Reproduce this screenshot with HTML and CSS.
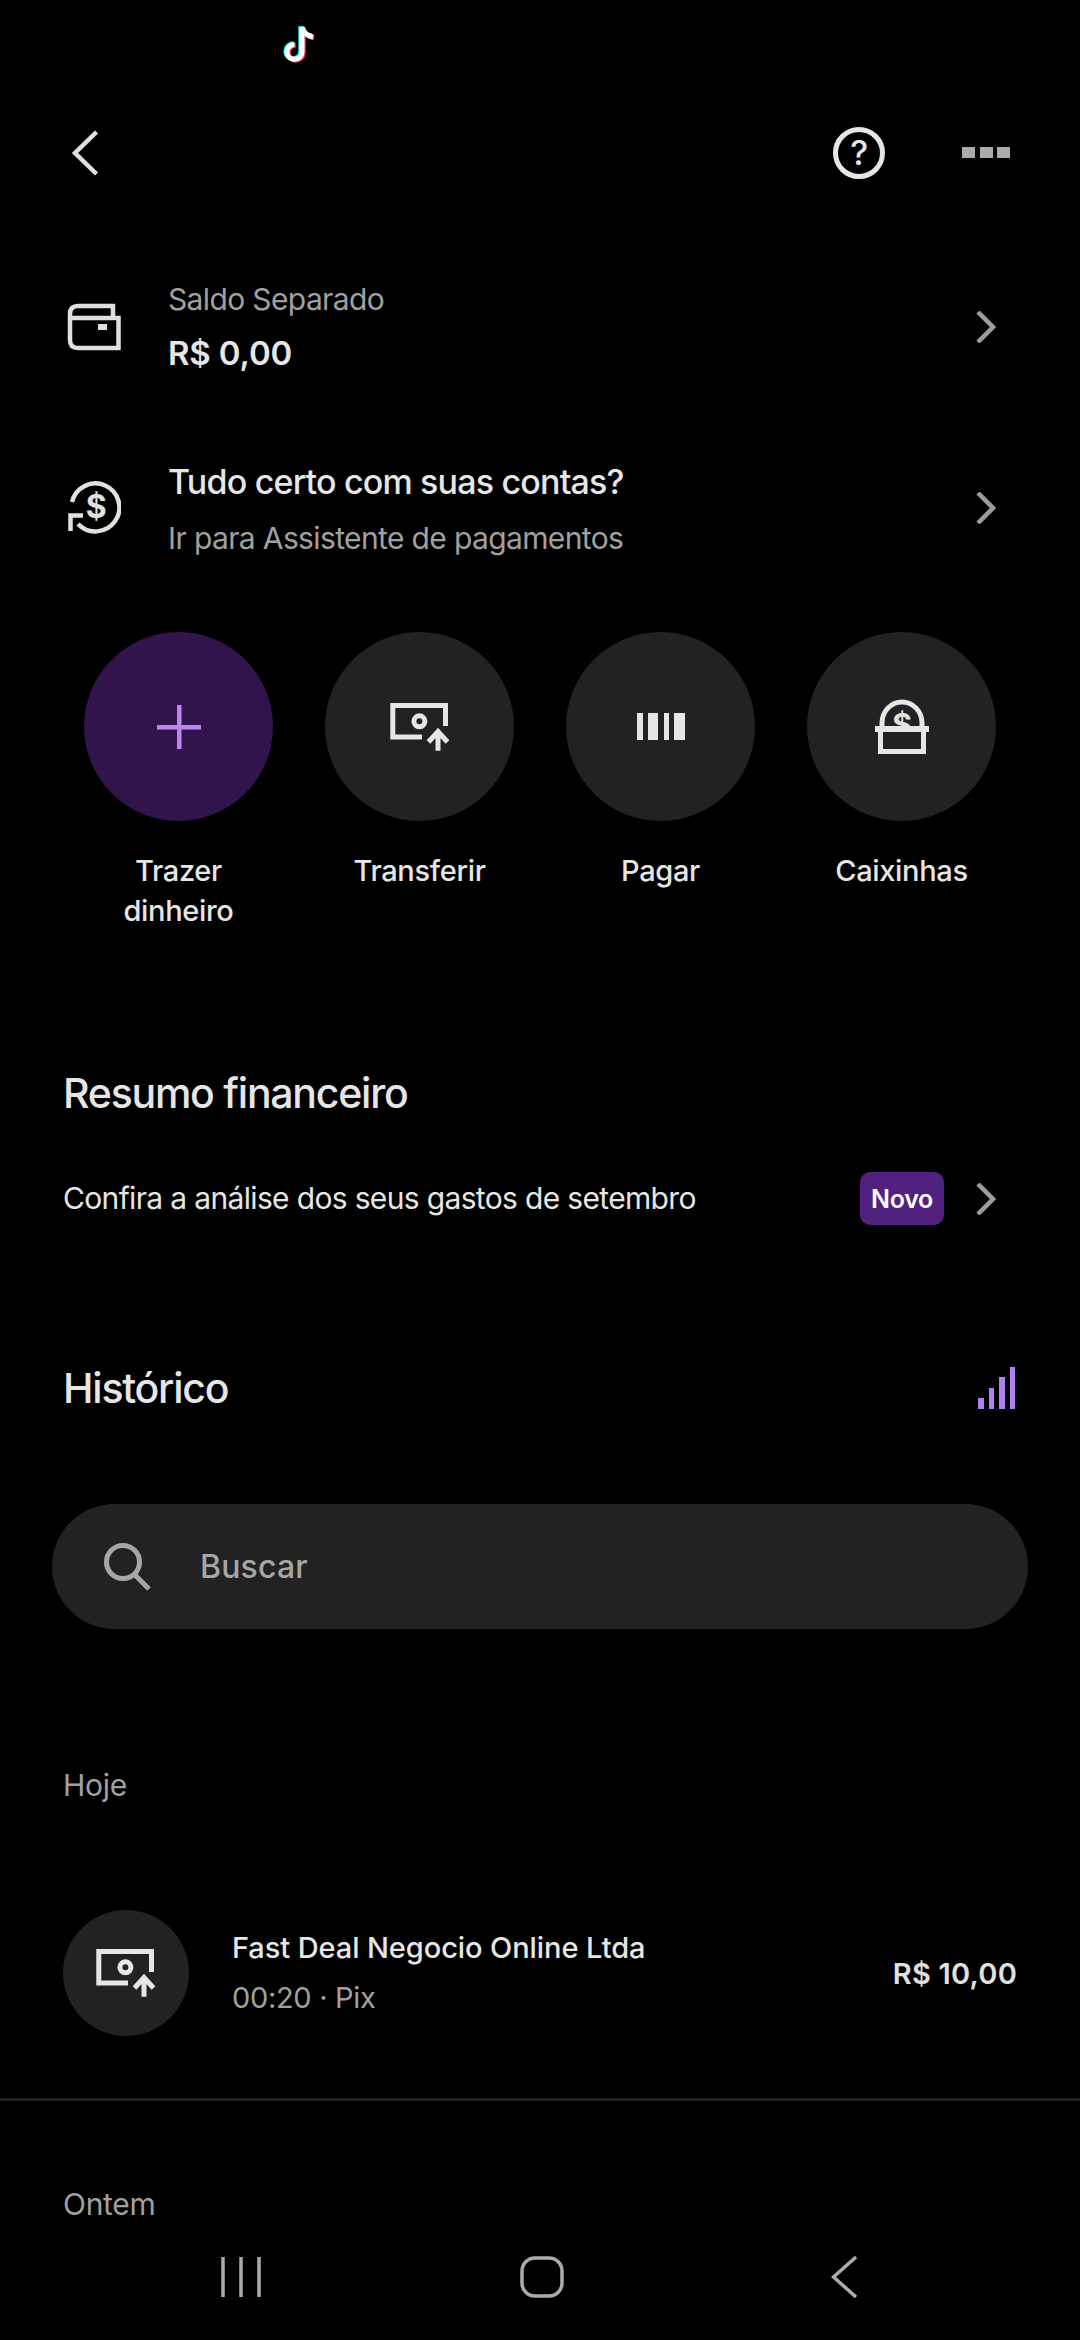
FILE: index.html
```html
<!DOCTYPE html>
<html lang="pt-BR">
<head>
  <meta charset="UTF-8" />
  <meta name="viewport" content="width=device-width, initial-scale=1.0"/>
  <title>Conta</title>
  <link rel="stylesheet" href="styles.css">
</head>
<body>
  <div class="screen">
    <div class="status">
      <svg class="tiktok" viewBox="0 0 36 40" fill="none" stroke-width="5">
        <path stroke="#25f4ee" transform="translate(-1.2 -.8)" d="M21 3V28A7.5 7.5 0 1 1 13.5 20.5M21 3C22 9 27 12 32 13"/>
        <path stroke="#fe2c55" transform="translate(1.2 .8)" d="M21 3V28A7.5 7.5 0 1 1 13.5 20.5M21 3C22 9 27 12 32 13"/>
        <path stroke="#fff" d="M21 3V28A7.5 7.5 0 1 1 13.5 20.5M21 3C22 9 27 12 32 13"/>
      </svg>
    </div>

    <div class="topbar">
      <svg class="back" viewBox="0 0 28 46" fill="none" stroke="#e0e0e0" stroke-width="4.5">
        <path d="M25.5 2L4 23L25.5 44"/>
      </svg>
      <svg class="help" viewBox="0 0 54 54" fill="none">
        <circle cx="27" cy="27" r="23.5" stroke="#e6e6e6" stroke-width="5"/>
        <text x="27" y="39" text-anchor="middle" class="help-mark">?</text>
      </svg>
      <div class="dots"><span></span><span></span><span></span></div>
    </div>

    <div class="info-row first">
      <svg class="row-icon" viewBox="0 0 54 48" fill="none" stroke="#e0e0e0" stroke-width="4.5">
        <path d="M46 15V3H11Q3 3 3 11V37Q3 45 11 45H51.5V15H3"/>
        <rect x="31" y="21" width="9" height="6" fill="#e0e0e0" stroke="none"/>
      </svg>
      <div class="info-text">
        <div class="muted">Saldo Separado</div>
        <div class="value">R$ 0,00</div>
      </div>
      <svg class="chevron" viewBox="0 0 20 32" fill="none" stroke="#9c9c9c" stroke-width="4.5">
        <path d="M2 1L17 16L2 31"/>
      </svg>
    </div>

    <div class="info-row second">
      <svg class="row-icon" viewBox="0 0 54 56" fill="none" stroke="#e0e0e0" stroke-width="4.5">
        <path d="M5 22A24 24 0 1 1 11 44"/>
        <path d="M3.5 51V35.5H16"/>
        <text x="29" y="38" text-anchor="middle" class="icon-dollar">$</text>
      </svg>
      <div class="info-text">
        <div class="value title">Tudo certo com suas contas?</div>
        <div class="muted">Ir para Assistente de pagamentos</div>
      </div>
      <svg class="chevron" viewBox="0 0 20 32" fill="none" stroke="#9c9c9c" stroke-width="4.5">
        <path d="M2 1L17 16L2 31"/>
      </svg>
    </div>

    <div class="actions">
      <div class="action">
        <div class="circle purple">
          <svg class="plus" viewBox="0 0 44 44" fill="#bb86f0">
            <rect x="0" y="20" width="44" height="4.5"/>
            <rect x="20" y="0" width="4.5" height="44"/>
          </svg>
        </div>
        <div class="action-label">Trazer dinheiro</div>
      </div>
      <div class="action">
        <div class="circle">
          <svg class="transfer" viewBox="0 0 60 50" fill="none" stroke="#e6e6e6" stroke-width="5">
            <path d="M55.5 24V3.5H2.8V35H32"/>
            <circle cx="29.4" cy="19.3" r="5.5"/>
            <path d="M48 48.7V29M38.5 40L48 29.5L57.5 40"/>
          </svg>
        </div>
        <div class="action-label">Transferir</div>
      </div>
      <div class="action">
        <div class="circle">
          <svg class="barcode" viewBox="0 0 48 27" fill="#e6e6e6">
            <rect x="0" width="6" height="27"/>
            <rect x="11" width="10" height="27"/>
            <rect x="27" width="5" height="27"/>
            <rect x="37" width="11" height="27"/>
          </svg>
        </div>
        <div class="action-label">Pagar</div>
      </div>
      <div class="action">
        <div class="circle">
          <svg class="piggy" viewBox="0 0 54 55" fill="none" stroke="#e6e6e6" stroke-width="5">
            <path d="M7 29V24A20 21 0 0 1 47 24V29"/>
            <text x="27" y="36" text-anchor="middle" class="icon-dollar small">$</text>
            <rect x="0" y="27" width="54" height="6" fill="#e6e6e6" stroke="none"/>
            <path fill="#222" d="M5.5 33V52.5H48.5V33"/>
          </svg>
        </div>
        <div class="action-label">Caixinhas</div>
      </div>
    </div>

    <h2 class="section-title resumo">Resumo financeiro</h2>
    <div class="summary">
      <span class="summary-text">Confira a análise dos seus gastos de setembro</span>
      <span class="badge">Novo</span>
      <svg class="chevron" viewBox="0 0 20 32" fill="none" stroke="#9c9c9c" stroke-width="4.5">
        <path d="M2 1L17 16L2 31"/>
      </svg>
    </div>

    <div class="history-head">
      <h2 class="section-title">Histórico</h2>
      <div class="bars"><span></span><span></span><span></span><span></span></div>
    </div>

    <div class="search">
      <svg class="search-icon" viewBox="0 0 48 48" fill="none" stroke="#a6a6a6" stroke-width="5">
        <circle cx="19" cy="19" r="16.5"/>
        <path d="M30 31L45 46"/>
      </svg>
      <span>Buscar</span>
    </div>

    <div class="day first">Hoje</div>
    <div class="tx">
      <div class="tx-circle">
        <svg class="transfer" viewBox="0 0 60 50" fill="none" stroke="#e6e6e6" stroke-width="5">
          <path d="M55.5 24V3.5H2.8V35H32"/>
          <circle cx="29.4" cy="19.3" r="5.5"/>
          <path d="M48 48.7V29M38.5 40L48 29.5L57.5 40"/>
        </svg>
      </div>
      <div class="tx-text">
        <div class="tx-name">Fast Deal Negocio Online Ltda</div>
        <div class="tx-sub">00:20 · Pix</div>
      </div>
      <div class="tx-amount">R$ 10,00</div>
    </div>
    <div class="divider"></div>
    <div class="day">Ontem</div>

    <div class="navbar">
      <svg class="nav-lines" viewBox="0 0 40 42" fill="none" stroke="#ababab" stroke-width="3.5">
        <path d="M2 1V41M20 1V41M38 1V41"/>
      </svg>
      <svg class="nav-home" viewBox="0 0 44 42" fill="none" stroke="#ababab" stroke-width="3.5">
        <rect x="2" y="2" width="40" height="38" rx="13"/>
      </svg>
      <svg class="nav-back" viewBox="0 0 27 42" fill="none" stroke="#ababab" stroke-width="3.5">
        <path d="M25 1L2.5 21L25 41"/>
      </svg>
    </div>
  </div>
</body>
</html>
```

FILE: styles.css
```css
* {
  box-sizing: border-box;
}

body {
  margin: 0;
  padding: 0;
  background: #000;
  font-family: Inter, Roboto, sans-serif;
  letter-spacing: -0.02em;
  color: #e6e6e6;
}

.screen {
  position: relative;
  width: 1080px;
  height: 2340px;
  overflow: hidden;
  background: #000;
}

.status {
  height: 100px;
  padding: 24px 0 0 281px;
}

.tiktok {
  display: block;
  width: 36px;
  height: 40px;
}

.topbar {
  display: flex;
  align-items: center;
  height: 105px;
  padding: 0 70px 0 71px;
}

.back {
  width: 28px;
  height: 46px;
  margin-right: auto;
}

.help {
  width: 54px;
  height: 54px;
}

.help-mark {
  font-family: Inter, sans-serif;
  font-size: 34px;
  font-weight: 500;
  fill: #e6e6e6;
  stroke: none;
}

.dots {
  display: flex;
  gap: 4.5px;
  margin-left: 76px;
}

.dots span {
  width: 13px;
  height: 11px;
  background: #ababab;
}

.info-row {
  display: flex;
  align-items: center;
  height: 100px;
  margin-top: 72px;
  padding: 0 84px 0 67px;
}

.info-row.second {
  margin-top: 81px;
}

.row-icon {
  flex: none;
  width: 54px;
  height: 50px;
}

.second .row-icon {
  height: 56px;
}

.info-text {
  flex: 1;
  margin-left: 47px;
}

.first .info-text {
  padding-bottom: 3px;
}

.second .info-text {
  padding-top: 3px;
}

.muted {
  font-size: 30px;
  line-height: 40px;
  letter-spacing: -0.021em;
  color: #a0a0a0;
}

.value {
  margin-top: 14px;
  font-size: 33px;
  line-height: 40px;
  font-weight: 600;
  letter-spacing: -0.005em;
}

.value.title {
  margin: 0 0 16px;
  font-size: 34px;
  font-weight: 500;
  letter-spacing: -0.024em;
}

.icon-dollar {
  font-family: Inter, sans-serif;
  font-size: 32px;
  font-weight: 700;
  fill: #e0e0e0;
  stroke: none;
}

.icon-dollar.small {
  font-size: 30px;
}

.chevron {
  flex: none;
  width: 20px;
  height: 32px;
}

.actions {
  display: grid;
  grid-template-columns: repeat(4, 241px);
  margin-top: 74px;
  padding-left: 58px;
}

.action {
  display: flex;
  flex-direction: column;
  align-items: center;
}

.circle {
  display: flex;
  align-items: center;
  justify-content: center;
  width: 189px;
  height: 189px;
  border-radius: 50%;
  background: #222;
}

.circle.purple {
  background: #32144d;
}

.plus {
  width: 44px;
  height: 44px;
}

.transfer {
  width: 60px;
  height: 50px;
}

.barcode {
  width: 48px;
  height: 27px;
}

.piggy {
  width: 54px;
  height: 55px;
}

.action-label {
  width: 160px;
  margin-top: 30px;
  font-size: 29px;
  line-height: 40px;
  font-weight: 500;
  text-align: center;
}

.section-title {
  margin: 0;
  font-size: 41px;
  line-height: 50px;
  font-weight: 500;
  letter-spacing: -0.03em;
}

.resumo {
  margin: 137px 0 0 63px;
}

.summary {
  display: flex;
  align-items: center;
  height: 53px;
  margin-top: 54px;
  padding: 0 84px 0 63px;
}

.summary-text {
  flex: 1;
  padding-bottom: 2px;
  font-size: 30px;
  letter-spacing: -0.022em;
}

.badge {
  display: flex;
  align-items: center;
  justify-content: center;
  width: 84px;
  height: 53px;
  margin-right: 32px;
  border-radius: 10px;
  background: #52207f;
  color: #fff;
  font-size: 25px;
  font-weight: 600;
}

.history-head {
  display: flex;
  align-items: center;
  justify-content: space-between;
  margin-top: 138px;
  padding: 0 65px 0 63px;
}

.bars {
  display: flex;
  align-items: flex-end;
  gap: 5px;
}

.bars span {
  width: 5.5px;
  height: 11px;
  background: #b07ff0;
}

.bars span:nth-child(2) {
  height: 21px;
}

.bars span:nth-child(3) {
  height: 32px;
}

.bars span:nth-child(4) {
  height: 42px;
}

.search {
  display: flex;
  align-items: center;
  height: 125px;
  margin: 91px 52px 0;
  padding-left: 52px;
  border-radius: 63px;
  background: #222;
  color: #a6a6a6;
  font-size: 32px;
  font-weight: 500;
  letter-spacing: 0.005em;
}

.search-icon {
  width: 48px;
  height: 48px;
  margin-right: 48px;
}

.day {
  margin-left: 63px;
  font-size: 30px;
  line-height: 40px;
  letter-spacing: -0.01em;
  color: #a0a0a0;
}

.day.first {
  margin-top: 136px;
}

.tx {
  display: flex;
  align-items: center;
  margin-top: 105px;
  padding: 0 63px;
}

.tx-circle {
  display: flex;
  flex: none;
  align-items: center;
  justify-content: center;
  width: 126px;
  height: 126px;
  border-radius: 50%;
  background: #222;
}

.tx-text {
  flex: 1;
  margin-left: 43px;
}

.tx-name {
  font-size: 29px;
  line-height: 40px;
  font-weight: 500;
  letter-spacing: -0.003em;
}

.tx-sub {
  margin-top: 10px;
  font-size: 29px;
  line-height: 40px;
  color: #a0a0a0;
}

.tx-amount {
  font-size: 29px;
  font-weight: 600;
  letter-spacing: 0.008em;
  color: #e0e0e0;
}

.divider {
  height: 3px;
  margin-top: 62px;
  background: #222;
}

.divider + .day {
  margin-top: 83px;
}

.navbar {
  position: absolute;
  left: 0;
  right: 0;
  bottom: 0;
  height: 110px;
  background: #000;
}

.nav-lines,
.nav-home,
.nav-back {
  position: absolute;
  top: 26px;
  height: 42px;
}

.nav-lines {
  left: 221px;
  width: 40px;
}

.nav-home {
  left: 520px;
  width: 44px;
}

.nav-back {
  left: 831px;
  width: 27px;
}
```
